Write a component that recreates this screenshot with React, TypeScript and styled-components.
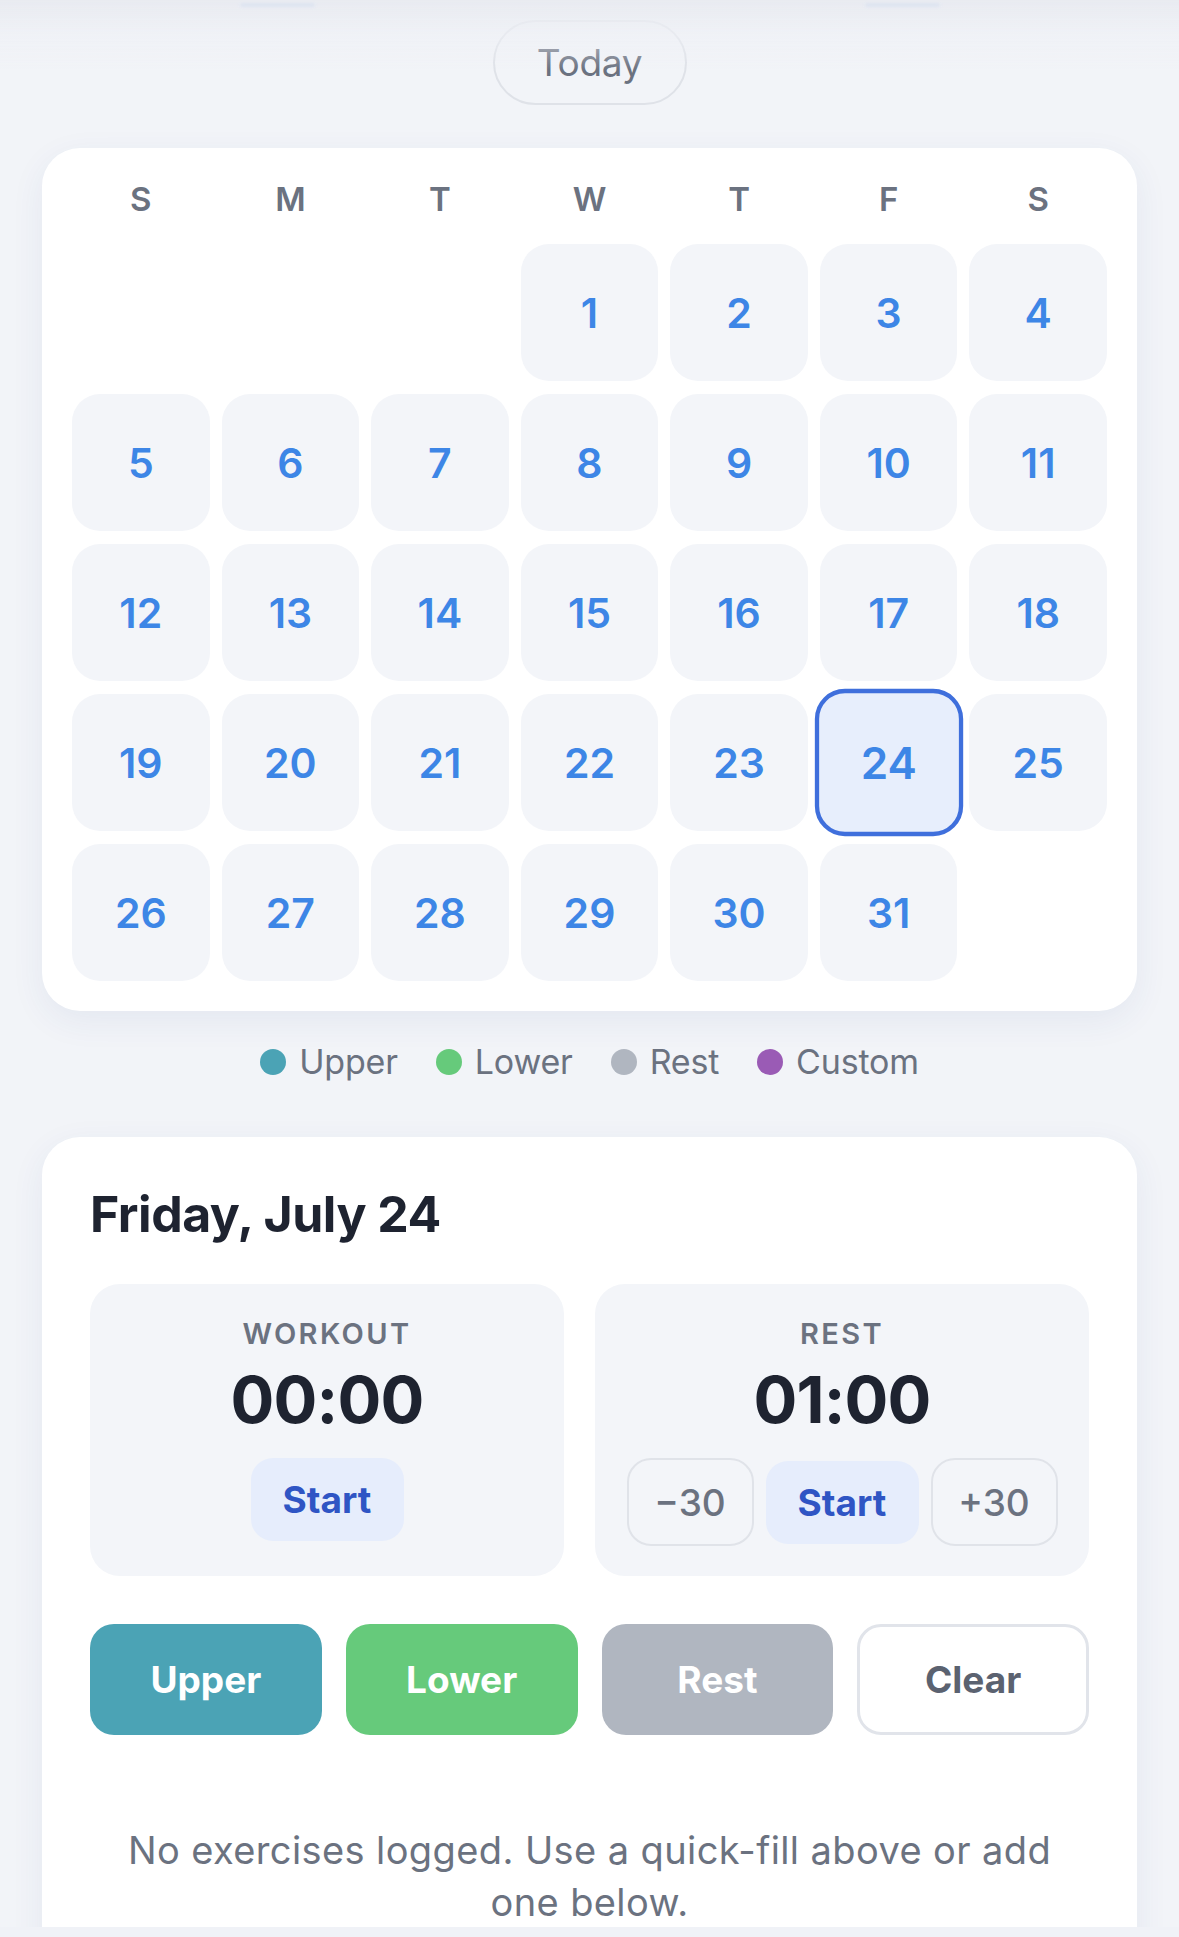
import { createGlobalStyle } from "styled-components";
import styled from "styled-components";

const GlobalStyle = createGlobalStyle`
  html, body {
    margin: 0;
    padding: 0;
    background: #f2f4f8;
    font-family: Inter, "Noto Sans", "Liberation Sans", sans-serif;
    -webkit-font-smoothing: antialiased;
  }
  * { box-sizing: border-box; }
`;

const WEEKDAYS = ["S", "M", "T", "W", "T", "F", "S"];
const FIRST_OFFSET = 3;
const DAYS_IN_MONTH = 31;
const SELECTED_DAY = 24;

const LEGEND = [
  { label: "Upper", color: "#4ba3b5" },
  { label: "Lower", color: "#66ca7b" },
  { label: "Rest", color: "#b0b6c0" },
  { label: "Custom", color: "#9a5bb5" },
];

const Page = styled.div`
  padding: 20px 42px 120px;
  min-height: 1937px;
`;

const TopFade = styled.div`
  position: fixed;
  top: 0;
  left: 0;
  right: 0;
  height: 70px;
  background: linear-gradient(
    to bottom,
    rgba(232, 234, 240, 0.95) 0%,
    rgba(238, 240, 245, 0.6) 50%,
    rgba(242, 244, 248, 0) 100%
  );
  pointer-events: none;
  z-index: 2;
`;

const FadedBar = styled.div<{ left: number }>`
  position: absolute;
  top: 3px;
  left: ${({ left }) => left}px;
  width: 75px;
  height: 4px;
  border-radius: 2px;
  background: #dde4f1;
  filter: blur(1.5px);
`;

const BottomStrip = styled.div`
  position: fixed;
  left: 0;
  right: 0;
  bottom: 0;
  height: 10px;
  background: #f0f2f7;
  z-index: 2;
`;

const TodayRow = styled.div`
  display: flex;
  justify-content: center;
`;

const TodayButton = styled.button`
  width: 194px;
  height: 85px;
  border-radius: 43px;
  border: 2.5px solid #dfe2e8;
  background: transparent;
  color: #6b7280;
  font-family: inherit;
  font-size: 37px;
  font-weight: 400;
  letter-spacing: -0.3px;
`;

const Card = styled.section`
  background: #ffffff;
  border-radius: 38px;
  box-shadow: 0 10px 34px rgba(40, 70, 140, 0.07);
`;

const CalendarCard = styled(Card)`
  margin-top: 43px;
  padding: 30px 30px 30px;
`;

const WeekHeader = styled.div`
  display: grid;
  grid-template-columns: repeat(7, 1fr);
  column-gap: 12px;
  height: 42px;
  margin-bottom: 24px;
`;

const WeekLetter = styled.div`
  display: flex;
  align-items: center;
  justify-content: center;
  color: #6b7280;
  font-size: 33px;
  font-weight: 600;
`;

const DaysGrid = styled.div`
  display: grid;
  grid-template-columns: repeat(7, 1fr);
  column-gap: 12px;
  row-gap: 13px;
`;

const DayCell = styled.button<{ selected?: boolean }>`
  height: 137px;
  border-radius: 28px;
  display: flex;
  align-items: center;
  justify-content: center;
  font-family: inherit;
  font-size: 41px;
  font-weight: 600;
  color: #3d86e6;
  background: ${({ selected }) => (selected ? "#e7eefc" : "#f3f5f9")};
  border: ${({ selected }) => (selected ? "4px solid #3f6fdc" : "none")};
  transform: ${({ selected }) => (selected ? "scale(1.075)" : "none")};
  padding: 0;
`;

const EmptyCell = styled.div`
  height: 137px;
`;

const Legend = styled.div`
  display: flex;
  justify-content: center;
  align-items: center;
  gap: 38px;
  margin-top: 30px;
  height: 41px;
`;

const LegendItem = styled.div`
  display: flex;
  align-items: center;
  gap: 13px;
  color: #6b7280;
  font-size: 34px;
  font-weight: 400;
  letter-spacing: -0.2px;
`;

const Dot = styled.span<{ color: string }>`
  width: 26px;
  height: 26px;
  border-radius: 50%;
  background: ${({ color }) => color};
`;

const DetailCard = styled(Card)`
  margin-top: 55px;
  padding: 47px 48px 60px;
`;

const Title = styled.h2`
  margin: 0;
  color: #1e2330;
  font-size: 50px;
  line-height: 60px;
  font-weight: 700;
  letter-spacing: -0.5px;
`;

const Timers = styled.div`
  display: grid;
  grid-template-columns: 474fr 494fr;
  column-gap: 31px;
  margin-top: 40px;
`;

const TimerBox = styled.div`
  background: #f3f5f9;
  border-radius: 30px;
  padding: 32px 24px 30px;
  display: flex;
  flex-direction: column;
  align-items: center;
`;

const TimerLabel = styled.div`
  color: #6b7280;
  font-size: 29px;
  line-height: 35px;
  font-weight: 600;
  letter-spacing: 2.4px;
`;

const TimerValue = styled.div`
  margin-top: 13px;
  color: #1e2330;
  font-size: 65px;
  line-height: 71px;
  font-weight: 700;
  letter-spacing: -0.8px;
`;

const TimerActions = styled.div`
  margin-top: 23px;
  display: flex;
  align-items: center;
  gap: 12px;
`;

const StartButton = styled.button`
  width: 153px;
  height: 83px;
  border: none;
  border-radius: 22px;
  background: #e6edfc;
  color: #2f55c4;
  font-family: inherit;
  font-size: 37px;
  font-weight: 700;
`;

const StepButton = styled.button`
  width: 127px;
  height: 88px;
  border: 2.5px solid #e0e3e9;
  border-radius: 24px;
  background: transparent;
  color: #6b7280;
  font-family: inherit;
  font-size: 37px;
  font-weight: 500;
`;

const QuickFill = styled.div`
  display: grid;
  grid-template-columns: repeat(4, 1fr);
  column-gap: 24px;
  margin-top: 48px;
`;

const FillButton = styled.button<{ bg: string; outlined?: boolean }>`
  height: 111px;
  border-radius: 24px;
  background: ${({ bg }) => bg};
  border: ${({ outlined }) => (outlined ? "3px solid #e1e4ea" : "none")};
  color: ${({ outlined }) => (outlined ? "#5b6270" : "#ffffff")};
  font-family: inherit;
  font-size: 37px;
  font-weight: 700;
`;

const EmptyText = styled.p`
  margin: 89px auto 0;
  max-width: 960px;
  text-align: center;
  color: #6b7280;
  font-size: 38px;
  line-height: 52px;
  font-weight: 400;
  letter-spacing: 0.4px;
`;

export default function App() {
  const cells: (number | null)[] = [
    ...Array.from({ length: FIRST_OFFSET }, () => null),
    ...Array.from({ length: DAYS_IN_MONTH }, (_, i) => i + 1),
  ];

  return (
    <>
      <GlobalStyle />
      <TopFade>
        <FadedBar left={240} />
        <FadedBar left={865} />
      </TopFade>
      <Page>
        <TodayRow>
          <TodayButton>Today</TodayButton>
        </TodayRow>

        <CalendarCard>
          <WeekHeader>
            {WEEKDAYS.map((d, i) => (
              <WeekLetter key={i}>{d}</WeekLetter>
            ))}
          </WeekHeader>
          <DaysGrid>
            {cells.map((day, i) =>
              day === null ? (
                <EmptyCell key={`e${i}`} />
              ) : (
                <DayCell key={day} selected={day === SELECTED_DAY}>
                  {day}
                </DayCell>
              )
            )}
          </DaysGrid>
        </CalendarCard>

        <Legend>
          {LEGEND.map((item) => (
            <LegendItem key={item.label}>
              <Dot color={item.color} />
              {item.label}
            </LegendItem>
          ))}
        </Legend>

        <DetailCard>
          <Title>Friday, July 24</Title>
          <Timers>
            <TimerBox>
              <TimerLabel>WORKOUT</TimerLabel>
              <TimerValue>00:00</TimerValue>
              <TimerActions>
                <StartButton>Start</StartButton>
              </TimerActions>
            </TimerBox>
            <TimerBox>
              <TimerLabel>REST</TimerLabel>
              <TimerValue>01:00</TimerValue>
              <TimerActions>
                <StepButton>−30</StepButton>
                <StartButton>Start</StartButton>
                <StepButton>+30</StepButton>
              </TimerActions>
            </TimerBox>
          </Timers>
          <QuickFill>
            <FillButton bg="#4ba3b5">Upper</FillButton>
            <FillButton bg="#66ca7b">Lower</FillButton>
            <FillButton bg="#b0b6c0">Rest</FillButton>
            <FillButton bg="#ffffff" outlined>
              Clear
            </FillButton>
          </QuickFill>
          <EmptyText>
            No exercises logged. Use a quick-fill above or add one below.
          </EmptyText>
        </DetailCard>
      </Page>
      <BottomStrip />
    </>
  );
}
